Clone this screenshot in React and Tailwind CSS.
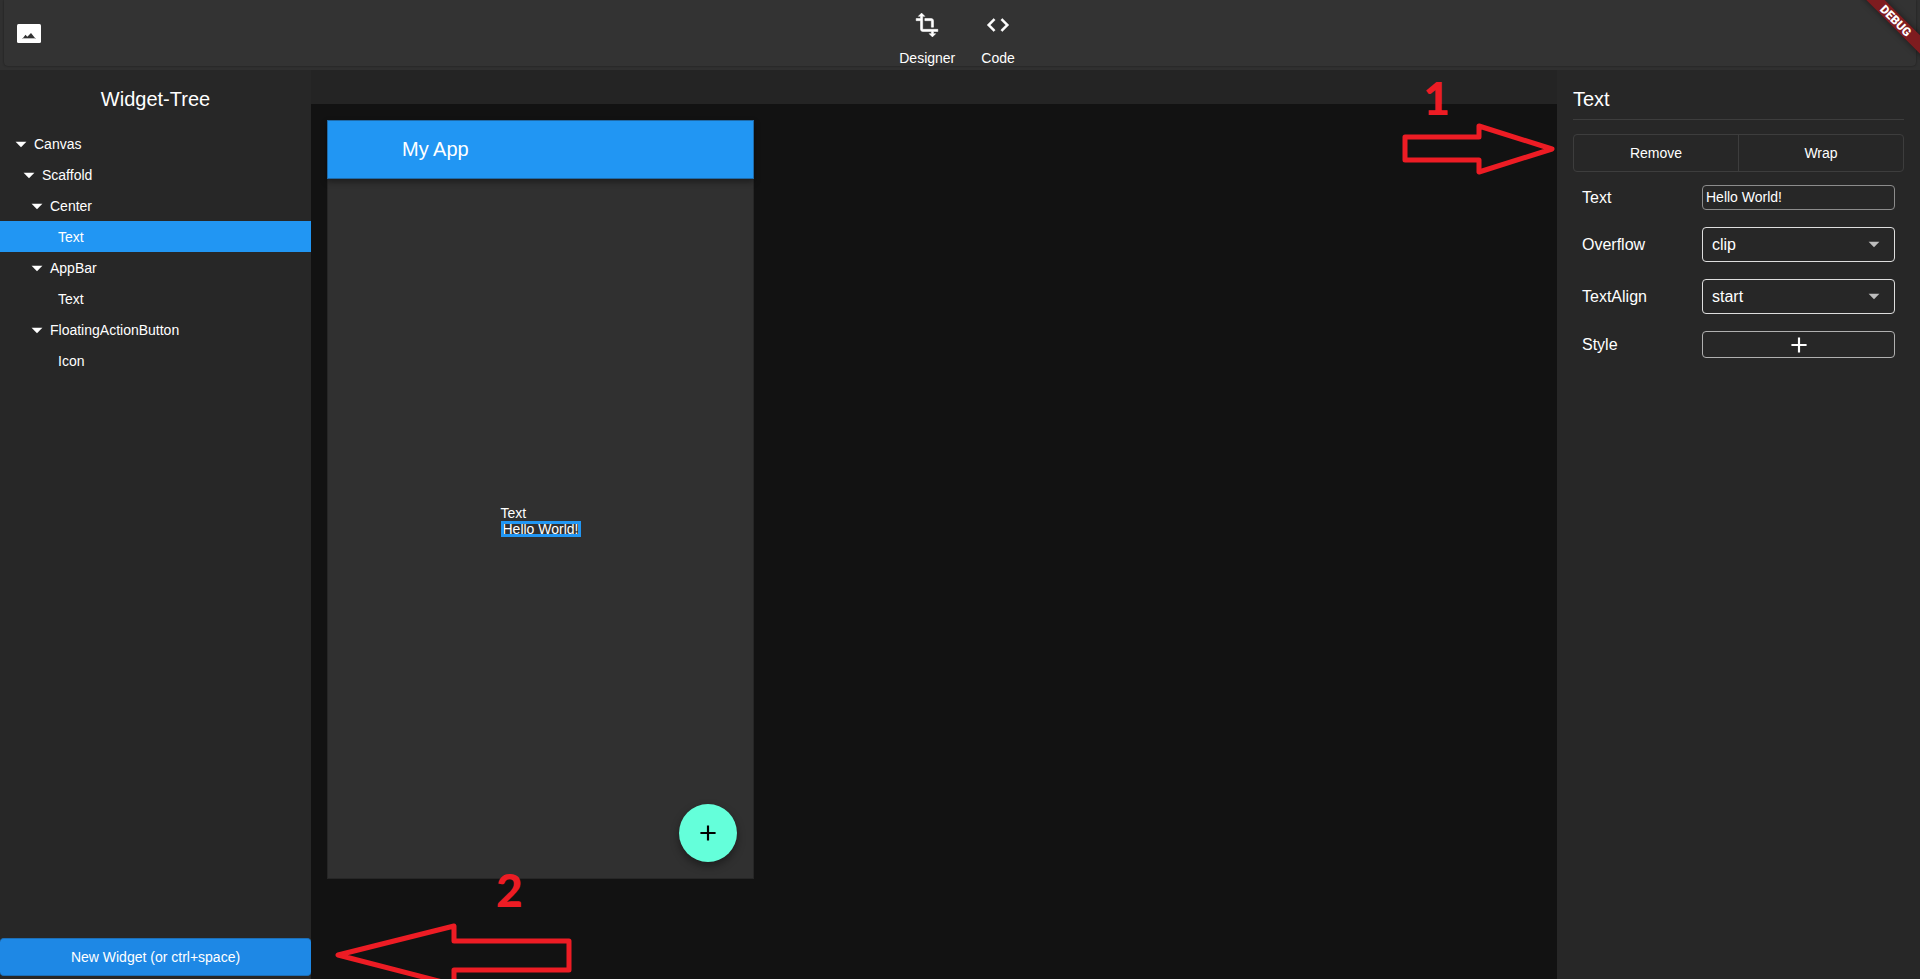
import { useState } from "react";
import { MdAdd, MdArrowDropDown } from "react-icons/md";

const TREE = [
  { label: "Canvas", depth: "pl-2", open: true },
  { label: "Scaffold", depth: "pl-4", open: true },
  { label: "Center", depth: "pl-6", open: true },
  { label: "Text", depth: "pl-[58px]", selected: true },
  { label: "AppBar", depth: "pl-6", open: true },
  { label: "Text", depth: "pl-[58px]" },
  { label: "FloatingActionButton", depth: "pl-6", open: true },
  { label: "Icon", depth: "pl-[58px]" },
];

const TABS = [
  {
    label: "Designer",
    icon: "M22 18v-2H8V4h2L7 1 4 4h2v2H2v2h4v8c0 1.1.9 2 2 2h8v2h-2l3 3 3-3h-2v-2h4zM10 8h6v6h2V8c0-1.1-.9-2-2-2h-6v2z",
  },
  {
    label: "Code",
    icon: "M9.4 16.6 4.8 12l4.6-4.6L8 6l-6 6 6 6 1.4-1.4zm5.2 0 4.6-4.6-4.6-4.6L16 6l6 6-6 6-1.4-1.4z",
  },
];

function TopBar() {
  return (
    <header className="h-[70px] shrink-0 bg-[#303030] px-1 pb-1">
      <div className="grid h-full grid-cols-[1fr_auto_1fr] items-center rounded-b bg-[#333333] px-3 shadow-[0_0_2px_rgba(0,0,0,0.5)]">
        <button type="button" aria-label="Images" className="size-7 justify-self-start">
          <svg viewBox="0 0 28 28" className="size-7">
            <rect x="1" y="5" width="24" height="19" rx="1.5" fill="#fff" />
            <path fill="#333" d="M7 19L9.5 15.8L11.3 17.8L15 14L19 19z" />
            <path fill="#bbb" d="M6 19h14v1H6z" />
          </svg>
        </button>
        <nav className="flex gap-[26px] self-end pr-[6px] text-sm leading-4">
          {TABS.map((tab) => (
            <button key={tab.label} type="button" className="flex flex-col items-center gap-3">
              <svg viewBox="0 0 24 24" className="size-[26px] fill-white stroke-white stroke-[0.5]">
                <path d={tab.icon} />
              </svg>
              <span>{tab.label}</span>
            </button>
          ))}
        </nav>
      </div>
    </header>
  );
}

function WidgetTree() {
  return (
    <aside className="flex w-[311px] shrink-0 flex-col bg-[#272727] pb-[3px]">
      <h1 className="py-[15px] text-center text-xl">Widget-Tree</h1>
      <ul className="grow text-sm">
        {TREE.map((node, i) => (
          <li key={i}>
            <button
              type="button"
              className={`flex h-[31px] w-full items-center ${node.depth} ${node.selected ? "bg-[#2196f3]" : ""}`}
            >
              {node.open && <MdArrowDropDown className="size-[26px]" />}
              {node.label}
            </button>
          </li>
        ))}
      </ul>
      <button type="button" className="h-[38px] rounded-sm border-y border-[#1c6fb8] bg-[#1e88e5] text-sm">
        New Widget (or ctrl+space)
      </button>
    </aside>
  );
}

function Phone() {
  return (
    <div className="relative flex h-[759px] w-[427px] flex-col border border-[#262626] bg-[#303030]">
      <div className="-mx-px -mt-px flex h-[59px] items-center border border-[#1f6aa8] bg-[#2196f3] pb-[2px] pl-[74px] text-xl shadow-[0_3px_6px_rgba(0,0,0,0.4)]">
        My App
      </div>
      <div className="flex grow items-center justify-center">
        <div className="relative px-[2px] text-sm leading-4 outline-[3px] -outline-offset-[3px] outline-[#2196f3]">
          <span className="absolute bottom-full left-0 leading-4">Text</span>
          Hello World!
        </div>
      </div>
      <button
        type="button"
        aria-label="Add"
        className="absolute right-4 bottom-4 flex size-[58px] items-center justify-center rounded-full bg-[#64ffda] text-black shadow-[0_4px_8px_rgba(0,0,0,0.4)]"
      >
        <MdAdd className="size-[26px]" />
      </button>
    </div>
  );
}

function SelectField({ id, options }) {
  return (
    <div className="relative">
      <select
        id={id}
        className="block h-[35px] w-full appearance-none rounded border border-[#dedede] bg-[#272727] px-[9px] text-base leading-5"
      >
        {options.map((o) => (
          <option key={o}>{o}</option>
        ))}
      </select>
      <MdArrowDropDown className="pointer-events-none absolute top-1 right-2 size-[26px] text-[#bdbdbd]" />
    </div>
  );
}

function Row({ id, label, children }) {
  return (
    <div className="grid grid-cols-[120px_1fr] items-center">
      <label htmlFor={id}>{label}</label>
      {children}
    </div>
  );
}

function Properties() {
  const [text, setText] = useState("Hello World!");
  return (
    <aside className="w-[363px] shrink-0 bg-[#272727] px-4">
      <h2 className="border-b border-[#3d3d3d] pt-[15px] pb-[6px] text-xl">Text</h2>
      <div className="mt-[14px] flex h-[38px] divide-x divide-[#3d3d3d] rounded-sm border border-[#3d3d3d] text-sm">
        <button type="button" className="flex-1">Remove</button>
        <button type="button" className="flex-1">Wrap</button>
      </div>
      <div className="mt-[13px] flex flex-col gap-[17px] px-[9px]">
        <Row id="text" label="Text">
          <input
            id="text"
            value={text}
            onChange={(e) => setText(e.target.value)}
            className="h-[25px] w-full min-w-0 rounded border border-[#8c8c8c] bg-transparent px-[3px] pb-[2px] text-sm"
          />
        </Row>
        <Row id="overflow" label="Overflow">
          <SelectField id="overflow" options={["clip", "fade", "ellipsis", "visible"]} />
        </Row>
        <Row id="align" label="TextAlign">
          <SelectField id="align" options={["start", "end", "left", "right", "center", "justify"]} />
        </Row>
        <Row id="style" label="Style">
          <button
            id="style"
            type="button"
            className="flex h-[27px] items-center justify-center rounded border border-[#b0b0b0]"
          >
            <MdAdd className="size-[26px]" />
          </button>
        </Row>
      </div>
    </aside>
  );
}

export default function App() {
  return (
    <div className="relative flex h-screen flex-col overflow-hidden bg-[#121212] font-['Liberation_Sans',Arial,sans-serif] text-white">
      <TopBar />
      <div className="flex min-h-0 grow">
        <WidgetTree />
        <main className="relative min-w-0 grow">
          <div className="h-[34px] bg-[#242424]" />
          <div className="p-4">
            <Phone />
          </div>
          <div className="absolute top-[3px] right-[107px] font-['Lato',sans-serif] text-[46px] leading-[50px] font-black text-[#ed1c24]">1</div>
          <svg className="absolute top-[52px] right-0 h-[56px] w-[156px]" viewBox="0 0 156 56" fill="none">
            <path d="M4 15H78V4L151 27L78 50V38H4Z" stroke="#ed1c24" strokeWidth="5" strokeLinejoin="round" />
          </svg>
          <div className="absolute bottom-[64px] left-[185px] font-['Lato',sans-serif] text-[46px] leading-[50px] font-black text-[#ed1c24]">2</div>
          <svg className="absolute bottom-0 left-[22px] h-[58px] w-[242px]" viewBox="0 0 242 58" fill="none">
            <path d="M5 34L121 5V20H236V49H121V64Z" stroke="#ed1c24" strokeWidth="5" strokeLinejoin="round" />
          </svg>
        </main>
        <Properties />
      </div>
      <div className="pointer-events-none absolute top-0 right-0 size-[60px] overflow-hidden">
        <div className="absolute top-[14px] -right-[31px] flex h-[13px] w-[110px] rotate-45 items-center justify-center bg-[#7e1c1f] font-[Roboto,sans-serif] text-[12px] font-black shadow-[0_0_6px_rgba(0,0,0,0.5)]">
          DEBUG
        </div>
      </div>
    </div>
  );
}
